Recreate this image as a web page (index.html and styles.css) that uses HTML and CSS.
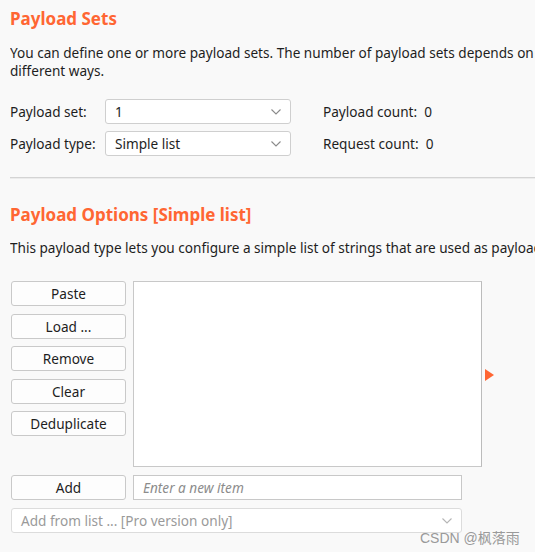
FILE: index.html
```html
<!DOCTYPE html>
<html>
<head>
<meta charset="utf-8">
<link rel="stylesheet" href="styles.css">
</head>
<body>
<div class="page">
  <section class="sets">
    <h2 class="heading">Payload Sets</h2>
    <p class="desc">You can define one or more payload sets. The number of payload sets depends on the attack type defined in the Positions tab. Various payload types are available for each payload set, and each payload type can be customized in<br>different ways.</p>
    <div class="form">
      <span class="label">Payload set:</span>
      <div class="select"><span>1</span><svg class="chev" viewBox="0 0 10 6"><path d="M0.5 0.5 L5 5 L9.5 0.5"/></svg></div>
      <span class="count">Payload count:&nbsp; 0</span>
      <span class="label">Payload type:</span>
      <div class="select"><span>Simple list</span><svg class="chev" viewBox="0 0 10 6"><path d="M0.5 0.5 L5 5 L9.5 0.5"/></svg></div>
      <span class="count">Request count:&nbsp; 0</span>
    </div>
  </section>
  <hr class="sep">
  <section class="options">
    <h2 class="heading">Payload Options [Simple list]</h2>
    <p class="desc">This payload type lets you configure a simple list of strings that are used as payloads.</p>
    <div class="listrow">
      <div class="btns">
        <button class="btn">Paste</button>
        <button class="btn">Load ...</button>
        <button class="btn">Remove</button>
        <button class="btn">Clear</button>
        <button class="btn">Deduplicate</button>
      </div>
      <div class="listbox"></div>
      <div class="arrow"></div>
    </div>
    <div class="addrow">
      <button class="btn add">Add</button>
      <div class="input">Enter a new item</div>
    </div>
    <div class="select wide disabled"><span>Add from list ... [Pro version only]</span><svg class="chev" viewBox="0 0 10 6"><path d="M0.5 0.5 L5 5 L9.5 0.5"/></svg></div>
  </section>
</div>
<div class="watermark">CSDN @枫落雨</div>
</body>
</html>
```

FILE: styles.css
```css
html, body {
  margin: 0;
  padding: 0;
  background: #f9f9f9;
  overflow: hidden;
  width: 535px;
  height: 552px;
}
body {
  font-family: "Noto Sans", "Open Sans", sans-serif;
  font-size: 13.6px;
  color: #1e1e1e;
  position: relative;
}
.page {
  padding: 0 0 0 10px;
  overflow: hidden;
}
.heading {
  margin: 0;
  font-size: 17px;
  font-weight: bold;
  color: #ff6633;
  line-height: 20px;
  white-space: nowrap;
}
.sets .heading {
  padding-top: 9px;
}
.desc {
  margin: 0;
  line-height: 18px;
  white-space: nowrap;
  overflow: hidden;
}
.sets .desc {
  margin-top: 15px;
}
.form {
  display: grid;
  grid-template-columns: 95px 186px auto;
  row-gap: 7px;
  align-items: center;
  margin-top: 19px;
}
.form .count {
  padding-left: 32px;
}
.select {
  height: 25px;
  box-sizing: border-box;
  border: 1px solid #cfcfcf;
  border-radius: 3px;
  background: #fff;
  display: flex;
  align-items: center;
  justify-content: space-between;
  padding: 0 9px 0 9px;
}
.chev {
  width: 10px;
  height: 6px;
  fill: none;
  stroke: #8a8a8a;
  stroke-width: 1.1;
}
.sep {
  margin: 21px 0 0 0;
  border: 0;
  height: 0;
  border-top: 1px solid #d4d4d4;
  border-bottom: 1px solid #ececec;
}
.options .heading {
  margin-top: 26px;
}
.options .desc {
  margin-top: 14px;
}
.listrow {
  display: flex;
  align-items: flex-start;
  margin-top: 24px;
  margin-left: 1px;
}
.btns {
  display: flex;
  flex-direction: column;
  gap: 7.5px;
  width: 115px;
}
.btn {
  height: 25px;
  box-sizing: border-box;
  border: 1px solid #c9c9c9;
  border-radius: 3px;
  background: #fdfdfd;
  font-family: inherit;
  font-size: 13.6px;
  color: #1e1e1e;
  padding: 0;
  width: 115px;
}
.listbox {
  margin-left: 7px;
  width: 349px;
  height: 186px;
  box-sizing: border-box;
  background: #fff;
  border: 1px solid #c8c8c8;
  border-right-color: #bcbcbc;
}
.arrow {
  margin-left: 3px;
  margin-top: 88px;
  width: 0;
  height: 0;
  border-top: 6px solid transparent;
  border-bottom: 6px solid transparent;
  border-left: 9px solid #ff6633;
}
.addrow {
  display: flex;
  gap: 7px;
  margin-top: 8px;
  margin-left: 1px;
}
.input {
  width: 329px;
  height: 25px;
  box-sizing: border-box;
  border: 1px solid #c8c8c8;
  background: #fff;
  font-style: italic;
  color: #8c8c8c;
  padding-left: 9px;
  line-height: 23px;
}
.wide {
  margin-top: 8px;
  margin-left: 1px;
  width: 451px;
  height: 25px;
  border-color: #dcdcdc;
}
.disabled span {
  color: #9a9a9a;
}
.disabled .chev {
  stroke: #b5b5b5;
}
.watermark {
  position: absolute;
  left: 420px;
  top: 527px;
  font-family: "Liberation Sans", "Noto Sans CJK SC", sans-serif;
  font-size: 14px;
  color: #9a9a9a;
}
```
